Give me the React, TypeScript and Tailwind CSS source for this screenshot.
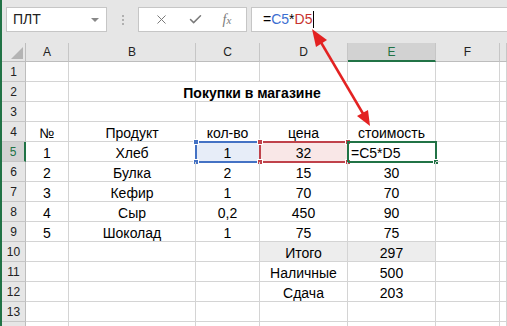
import { X, Check } from "lucide-react";

const cols = ["A", "B", "C", "D", "E", "F", ""];

const rows: Record<number, string[]> = {
  4: ["№", "Продукт", "кол-во", "цена", "стоимость"],
  5: ["1", "Хлеб", "1", "32", ""],
  6: ["2", "Булка", "2", "15", "30"],
  7: ["3", "Кефир", "1", "70", "70"],
  8: ["4", "Сыр", "0,2", "450", "90"],
  9: ["5", "Шоколад", "1", "75", "75"],
  10: ["", "", "", "Итого", "297"],
  11: ["", "", "", "Наличные", "500"],
  12: ["", "", "", "Сдача", "203"],
};

const grid = "grid grid-cols-[24px_43px_127px_64px_88px_88px_64px_1fr]";
const cellBase = "relative flex items-center justify-center border-r border-b border-[#d4d4d4] text-[14px] text-black leading-none pt-[2px]";

const Handle = ({ pos, color }: { pos: string; color: string }) => (
  <div className={`absolute w-[6px] h-[6px] border border-white ${pos} ${color}`} />
);

const Row = ({ n }: { n: number }) => {
  const data = rows[n] ?? [];
  const sel = n === 5;
  return (
    <div className={`${grid} h-[20px]`}>
      <div
        className={`flex items-center justify-center text-[12px] leading-none pt-[1px] border-b border-[#c6c6c6] ${
          sel ? "bg-[#d2d2d2] text-[#217346] border-r-2 border-r-[#217346]" : "bg-[#e6e6e6] text-[#222] border-r border-r-[#bdbdbd]"
        }`}
      >
        {n < 14 ? n : ""}
      </div>
      {n === 2 ? (
        <>
          <div className={cellBase} />
          <div className={`${cellBase} col-span-4 font-bold`}>Покупки в магазине</div>
          <div className={cellBase} />
          <div className={cellBase} />
        </>
      ) : (
        cols.map((c, i) => {
          const t = data[i] ?? "";
          if (sel && c === "C")
            return (
              <div key={c} className={`${cellBase} bg-[#e7edf8]`}>
                {t}
                <div className="absolute -left-[1px] -top-[1px] -right-[2px] -bottom-[2px] border-2 border-[#4472c4]">
                  <Handle pos="-left-[4px] -top-[4px]" color="bg-[#4472c4]" />
                  <Handle pos="-left-[4px] -bottom-[4px]" color="bg-[#4472c4]" />
                </div>
              </div>
            );
          if (sel && c === "D")
            return (
              <div key={c} className={`${cellBase} bg-[#f9e7e7]`}>
                {t}
                <div className="absolute -left-[1px] -top-[1px] -right-[2px] -bottom-[2px] border-2 border-[#c0424b]">
                  <Handle pos="-left-[4px] -top-[4px]" color="bg-[#c0424b]" />
                  <Handle pos="-left-[4px] -bottom-[4px]" color="bg-[#c0424b]" />
                  <Handle pos="-right-[4px] -top-[4px]" color="bg-[#c0424b]" />
                  <Handle pos="-right-[4px] -bottom-[4px]" color="bg-[#c0424b]" />
                </div>
              </div>
            );
          if (sel && c === "E")
            return (
              <div key={c} className={`${cellBase} justify-start pl-[3px]`}>
                =C5*D5
                <div className="absolute -left-[1px] -top-[1px] -right-[2px] -bottom-[2px] border-2 border-[#217346]">
                  <Handle pos="-right-[4px] -bottom-[4px]" color="bg-[#217346]" />
                </div>
              </div>
            );
          const gray = n === 10 && (c === "D" || c === "E");
          return (
            <div key={c} className={`${cellBase} ${gray ? "bg-[#ededed]" : ""}`}>
              {t}
            </div>
          );
        })
      )}
    </div>
  );
};

export default function App() {
  return (
    <div className="relative w-[507px] h-[326px] overflow-hidden bg-white border-l-2 border-[#217346] font-['Liberation_Sans',Arial,sans-serif]">
      {/* formula bar */}
      <div className="flex items-start h-[43px] bg-[#e6e6e6] pt-[7px]">
        <div className="ml-[4px] w-[101px] h-[25px] bg-white border border-[#c6c6c6] flex items-center justify-between pl-[6px] pr-[7px] text-[14px] text-[#222]">
          <span>ПЛТ</span>
          <span className="w-0 h-0 border-l-[4px] border-r-[4px] border-t-[4px] border-l-transparent border-r-transparent border-t-[#888]" />
        </div>
        <div className="w-[31px] h-[25px] flex flex-col items-center justify-center gap-[2px]">
          <span className="w-[2px] h-[2px] bg-[#b0b0b0]" />
          <span className="w-[2px] h-[2px] bg-[#b0b0b0]" />
          <span className="w-[2px] h-[2px] bg-[#b0b0b0]" />
        </div>
        <div className="w-[109px] h-[25px] bg-white border border-[#c6c6c6] flex items-center justify-around px-[5px] text-[#7a7a7a]">
          <X size={15} strokeWidth={1.6} />
          <Check size={15} strokeWidth={2.4} />
          <span className="font-['Liberation_Serif',serif] italic text-[14px] leading-none">
            f<span className="text-[11px]">x</span>
          </span>
        </div>
        <div className="ml-[4px] flex-1 h-[25px] bg-white border border-r-0 border-[#c6c6c6] flex items-center pl-[11px] text-[14px]">
          <span className="text-black">=</span>
          <span className="text-[#3b6fd1]">C5</span>
          <span className="text-black">*</span>
          <span className="text-[#c8322e]">D5</span>
          <span className="ml-[1px] w-[1px] h-[17px] bg-black" />
        </div>
      </div>

      {/* column headers */}
      <div className={`${grid} h-[19px] bg-[#e6e6e6]`}>
        <div className="relative border-r border-b border-[#bdbdbd]">
          <svg className="absolute right-[2px] bottom-[2px]" width="12" height="12">
            <polygon points="12,0 12,12 0,12" fill="#b4b4b4" />
          </svg>
        </div>
        {cols.map((c) => (
          <div
            key={c || "g"}
            className={`flex items-center justify-center text-[12px] leading-none border-r border-[#c6c6c6] ${
              c === "E" ? "bg-[#d2d2d2] text-[#217346] border-b-2 border-b-[#217346]" : "text-[#222] border-b border-b-[#bdbdbd]"
            }`}
          >
            {c}
          </div>
        ))}
      </div>

      {[1, 2, 3, 4, 5, 6, 7, 8, 9, 10, 11, 12, 13, 14].map((n) => (
        <Row key={n} n={n} />
      ))}

      {/* red double arrow */}
      <svg className="absolute left-0 top-0 pointer-events-none" width="507" height="326">
        <line x1="317" y1="39" x2="363" y2="117" stroke="#e32222" strokeWidth="2.5" />
        <polygon points="310,29 314,47 325,40" fill="#e32222" />
        <polygon points="368,126 355,116 366,110" fill="#e32222" />
      </svg>
    </div>
  );
}
